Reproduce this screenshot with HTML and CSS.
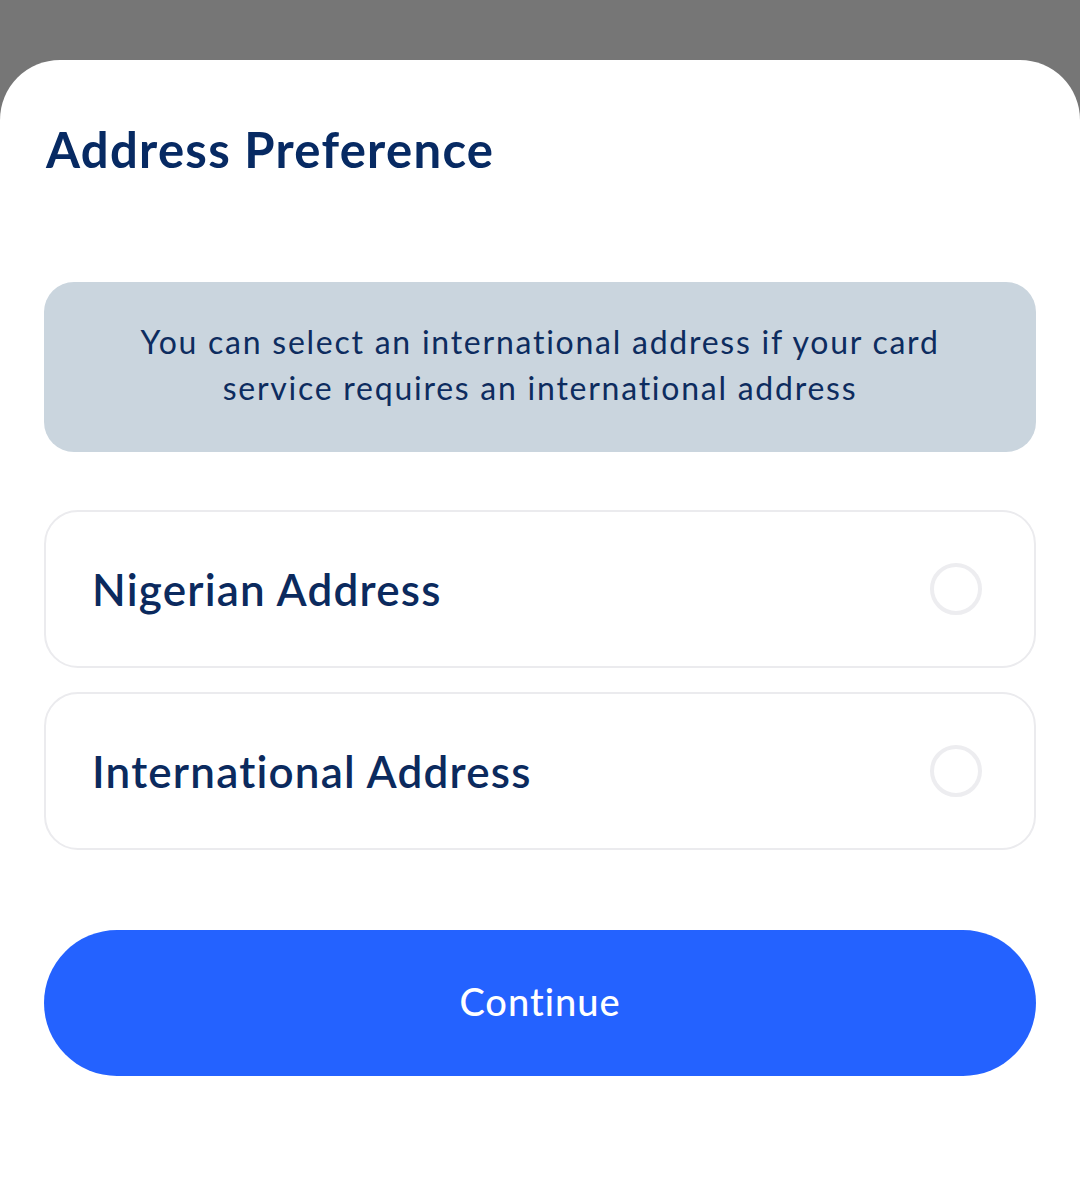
FILE: index.html
```html
<!DOCTYPE html>
<html>
<head>
<meta charset="utf-8">
<link rel="stylesheet" href="styles.css">
</head>
<body>
<div class="sheet">
  <h1 class="title">Address Preference</h1>
  <div class="info">You can select an international address if your card<br>service requires an international address</div>
  <div class="options">
    <label class="option"><span class="option-label">Nigerian Address</span><span class="radio"></span></label>
    <label class="option"><span class="option-label">International Address</span><span class="radio"></span></label>
  </div>
  <button class="continue">Continue</button>
</div>
</body>
</html>
```
FILE: styles.css
```css
html, body {
  margin: 0;
  padding: 0;
  background: #767676;
  height: 100%;
}
body {
  font-family: "Lato", "Noto Sans", sans-serif;
  color: #0b2a5e;
}
.sheet {
  margin-top: 60px;
  background: #ffffff;
  border-radius: 60px 60px 0 0;
  padding: 60px 44px 0 44px;
  min-height: calc(100% - 120px);
  display: flex;
  flex-direction: column;
}
.title {
  margin: 0 0 0 2px;
  font-size: 49px;
  font-weight: 700;
  line-height: 58px;
  color: #072a63;
  letter-spacing: 1.3px;
}
.info {
  margin-top: 104px;
  height: 170px;
  box-sizing: border-box;
  padding-bottom: 4px;
  background: #cad5de;
  border-radius: 30px;
  display: flex;
  align-items: center;
  justify-content: center;
  text-align: center;
  font-size: 32px;
  line-height: 46px;
  color: #0d2c5f;
  letter-spacing: 1.75px;
}
.options {
  margin-top: 58px;
  display: flex;
  flex-direction: column;
  gap: 24px;
}
.option {
  height: 158px;
  box-sizing: border-box;
  border: 2px solid #ebebee;
  border-radius: 34px;
  display: flex;
  align-items: center;
  justify-content: space-between;
  padding: 0 52px 0 46px;
}
.option-label {
  font-size: 44px;
  font-weight: 600;
  color: #0b2a5e;
  letter-spacing: 1.2px;
}
.radio {
  width: 52px;
  height: 52px;
  box-sizing: border-box;
  border: 4px solid #ededf0;
  border-radius: 50%;
}
.continue {
  margin-top: 80px;
  height: 146px;
  padding: 0 0 4px 0;
  border: none;
  border-radius: 73px;
  background: #2462ff;
  color: #ffffff;
  font-family: "Lato", "Noto Sans", sans-serif;
  font-size: 38px;
  font-weight: 500;
  letter-spacing: 1px;
}
```
